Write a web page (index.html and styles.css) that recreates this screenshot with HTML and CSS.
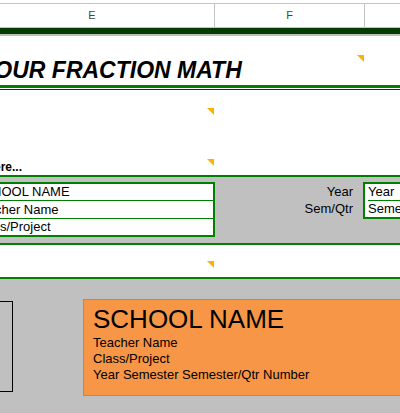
FILE: index.html
```html
<!DOCTYPE html>
<html lang="en">
<head>
    <meta charset="UTF-8">
    <meta name="viewport" content="width=device-width, initial-scale=1.0">
    <title>Fraction Math Sheet</title>
    <link rel="stylesheet" href="styles.css">
</head>
<body>
    <div class="sheet">
        <!-- Column headers -->
        <div class="top-gap"></div>
        <div class="row col-header">
            <div class="head-cell"></div>
            <div class="head-cell">E</div>
            <div class="head-cell">F</div>
            <div class="head-cell"></div>
        </div>
        <div class="frozen-bar"></div>

        <!-- Title block -->
        <div class="row title-gap"></div>
        <div class="row title-row">
            <div class="title-cell">YOUR FRACTION MATH</div>
            <div class="cell"><span class="note"></span></div>
        </div>
        <div class="double-rule"></div>

        <!-- Blank rows with notes -->
        <div class="row blank-row short"></div>
        <div class="row blank-row tall">
            <div class="wide-cell"><span class="note"></span></div>
        </div>
        <div class="row blank-row cue-row">
            <div class="wide-cell">
                <div class="cue"><span>Type your school info here...</span></div>
                <span class="note"></span>
            </div>
        </div>

        <!-- School info band -->
        <div class="info-band">
            <div class="info-box">
                <div class="info-row">SCHOOL NAME</div>
                <div class="info-row mid">Teacher Name</div>
                <div class="info-row">Class/Project</div>
            </div>
            <div class="info-labels">
                <div class="label-row">Year</div>
                <div class="label-row">Sem/Qtr</div>
            </div>
            <div class="info-box term-box">
                <div class="info-row">Year</div>
                <div class="info-row">Semester</div>
            </div>
        </div>

        <!-- Blank white band -->
        <div class="row white-band">
            <div class="wide-cell"><span class="note low"></span></div>
        </div>

        <!-- Preview area -->
        <div class="preview">
            <div class="frame-box"></div>
            <div class="label-card">
                <div class="card-title">SCHOOL NAME</div>
                <div class="card-line">Teacher Name</div>
                <div class="card-line">Class/Project</div>
                <div class="card-line">Year Semester Semester/Qtr Number</div>
            </div>
        </div>
    </div>
</body>
</html>
```

FILE: styles.css
```css
body, html {
    margin: 0;
    padding: 0;
    font-family: "Liberation Sans", Arial, sans-serif;
    background-color: white;
    overflow: hidden;
    height: 100%;
}

/* Sheet starts left of the window, like a scrolled spreadsheet */
.sheet {
    margin-left: -80px;
    width: 600px;
    min-height: 100%;
    background-color: #c0c0c0;
}

.row {
    display: grid;
    grid-template-columns: 50px 245px 150px 155px;
    background-color: white;
}

/* Column headers */
.top-gap {
    height: 3px;
    background-color: white;
}

.col-header {
    border-top: 1px solid #c4c4c4;
    border-bottom: 1px solid #c4c4c4;
}

.head-cell {
    height: 23px;
    line-height: 23px;
    text-align: center;
    font-size: 11px;
    color: #444;
    border-right: 1px solid #c4c4c4;
}

.frozen-bar {
    height: 6px;
    background-color: #053b05;
    border-bottom: 2px solid #bdbdbd;
}

/* Title */
.title-gap {
    height: 19px;
}

.title-row {
    height: 30px;
}

.title-cell {
    grid-column: 1 / 3;
    padding-left: 59px;
    padding-top: 1px;
    line-height: 29px;
    font-size: 23px;
    font-weight: bold;
    font-style: italic;
    white-space: nowrap;
}

.cell,
.wide-cell {
    position: relative;
}

.wide-cell {
    grid-column: 1 / 3;
}

.double-rule {
    height: 1px;
    background-color: white;
    border-top: 3px solid #008000;
    border-bottom: 1px solid #003c00;
}

/* Note indicator */
.note {
    position: absolute;
    top: 0;
    right: 1px;
    width: 0;
    height: 0;
    border-left: 7px solid transparent;
    border-top: 7px solid #f9b300;
}

.note.low {
    top: 16px;
}

.blank-row.short {
    height: 18px;
}

.blank-row.tall {
    height: 51px;
}

.blank-row.cue-row {
    height: 16px;
}

.cue {
    width: 102px;
    display: flex;
    justify-content: flex-end;
    white-space: nowrap;
    font-size: 12px;
    font-weight: bold;
    line-height: 16px;
}

/* School info band */
.info-band {
    display: flex;
    align-items: flex-start;
    height: 66px;
    background-color: #c0c0c0;
    border-top: 2px solid #008000;
    border-bottom: 2px solid #008000;
    font-size: 13px;
}

.info-box {
    margin-top: 5px;
    margin-left: 40px;
    width: 255px;
    box-sizing: border-box;
    border: 2px solid #008000;
    background-color: white;
    padding-left: 12px;
}

.info-row {
    height: 16px;
    line-height: 16px;
    white-space: nowrap;
}

.info-row + .info-row {
    border-top: 1px solid #008000;
}

.info-row.mid {
    height: 17px;
    line-height: 17px;
}

.info-labels {
    width: 138px;
    margin-top: 7px;
    text-align: right;
}

.label-row {
    line-height: 16px;
    margin-bottom: 1px;
}

.term-box {
    margin-left: 10px;
    width: 120px;
    padding-left: 3px;
}

/* White band */
.white-band {
    height: 32px;
    border-bottom: 2px solid #008000;
}

/* Preview */
.preview {
    display: flex;
    align-items: flex-start;
    height: 140px;
    background-color: #c0c0c0;
}

.frame-box {
    margin-top: 22px;
    margin-left: 40px;
    width: 53px;
    height: 91px;
    box-sizing: border-box;
    border: 1px solid #000;
}

.label-card {
    margin-top: 20px;
    margin-left: 70px;
    width: 340px;
    height: 97px;
    box-sizing: border-box;
    border: 1px solid #4bacc6;
    background-color: #f79646;
    padding: 4px 0 0 9px;
    white-space: nowrap;
}

.card-title {
    font-size: 26px;
    line-height: 31px;
}

.card-line {
    font-size: 13px;
    line-height: 16px;
}
```
